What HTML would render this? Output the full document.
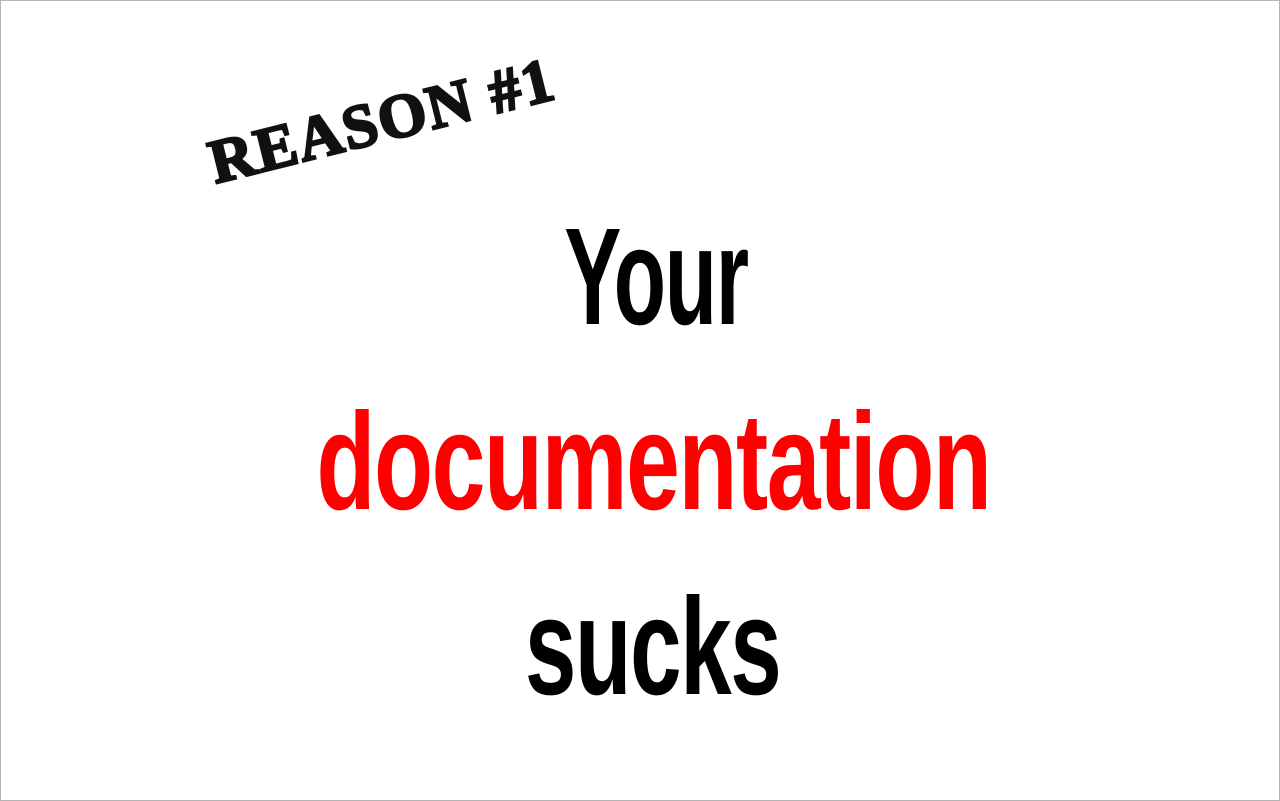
<!DOCTYPE html>
<html><head><meta charset="utf-8"><style>
html,body{margin:0;padding:0;background:#fff;}
body{width:1280px;height:801px;position:relative;overflow:hidden;}
.frame{position:absolute;left:0;top:0;width:1278px;height:799px;border:1px solid #b5b5b5;}
.stamp{position:absolute;left:203px;top:134px;font-family:"Liberation Serif",serif;font-weight:bold;font-size:62px;letter-spacing:2px;color:#111;-webkit-text-stroke:2.5px #111;transform:rotate(-14deg);transform-origin:left top;white-space:nowrap;line-height:1;}
.line{position:absolute;left:0;width:1280px;text-align:center;font-family:"Liberation Sans Narrow","Liberation Sans",sans-serif;font-weight:bold;font-size:138px;line-height:1;white-space:nowrap;box-sizing:border-box;}
.line span{display:inline-block;letter-spacing:-2px;}
</style></head><body>
<div class="frame"></div>
<div class="stamp">REASON #1</div>
<div class="line" style="top:208px;color:#000;padding-left:32px"><span style="transform:scaleX(0.62)">Your</span></div>
<div class="line" style="top:393px;color:#f00;padding-left:26px"><span style="transform:scaleX(0.70)">documentation</span></div>
<div class="line" style="top:578px;color:#000;padding-left:26px"><span style="transform:scaleX(0.67)">sucks</span></div>
</body></html>
